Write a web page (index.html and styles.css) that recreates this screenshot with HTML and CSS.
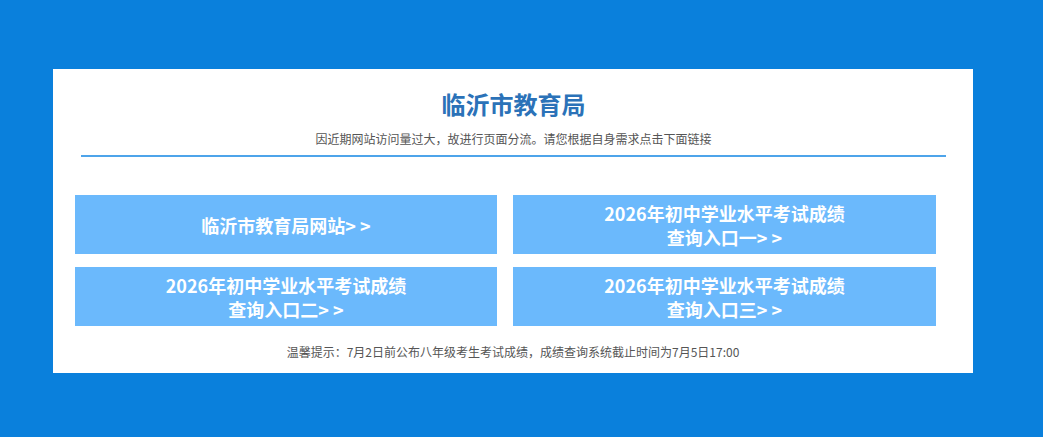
FILE: index.html
```html
<!DOCTYPE html>
<html lang="zh-CN">
<head>
    <meta charset="UTF-8">
    <meta name="viewport" content="width=device-width, initial-scale=1.0">
    <title>临沂市教育局</title>
    <link rel="stylesheet" href="styles.css">
</head>
<body>

<div class="box">
    <div class="head">
        <h1>临沂市教育局</h1>
        <p>因近期网站访问量过大，故进行页面分流。请您根据自身需求点击下面链接</p>
    </div>

    <div class="links">
        <a class="link" href="#">临沂市教育局网站&gt; &gt;</a>
        <a class="link" href="#">2026年初中学业水平考试成绩<br>查询入口一&gt; &gt;</a>
        <a class="link" href="#">2026年初中学业水平考试成绩<br>查询入口二&gt; &gt;</a>
        <a class="link" href="#">2026年初中学业水平考试成绩<br>查询入口三&gt; &gt;</a>
    </div>

    <p class="tip">温馨提示：7月2日前公布八年级考生考试成绩，成绩查询系统截止时间为7月5日17:00</p>
</div>

</body>
</html>
```

FILE: styles.css
```css
body {
    margin: 0;
    padding: 69px 0 0;
    background-color: #0a80dc;
    font-family: "Microsoft YaHei", "Noto Sans CJK SC", "Noto Sans", sans-serif;
}
.box {
    width: 920px;
    height: 304px;
    margin-left: 53px;
    background: #fff;
    box-sizing: border-box;
}
.head {
    margin: 0 27px 0 28px;
    padding-top: 20px;
    text-align: center;
    border-bottom: 2px solid #4ea4ea;
}
.head h1 {
    margin: 0;
    font-size: 24px;
    line-height: 30px;
    color: #2b72b8;
    font-weight: bold;
}
.head p {
    margin: 12px 0 8px;
    font-size: 12px;
    line-height: 16px;
    color: #555;
}
.links {
    display: grid;
    grid-template-columns: 422px 423px;
    column-gap: 16px;
    row-gap: 13px;
    padding: 38px 0 0 22px;
}
.link {
    height: 59px;
    display: flex;
    align-items: center;
    justify-content: center;
    text-align: center;
    background-color: #6bb9fc;
    color: #fff;
    font-size: 18px;
    line-height: 24px;
    font-weight: bold;
    text-decoration: none;
}
.tip {
    margin: 18px 0 0;
    text-align: center;
    font-size: 12px;
    line-height: 16px;
    color: #555;
}
```
